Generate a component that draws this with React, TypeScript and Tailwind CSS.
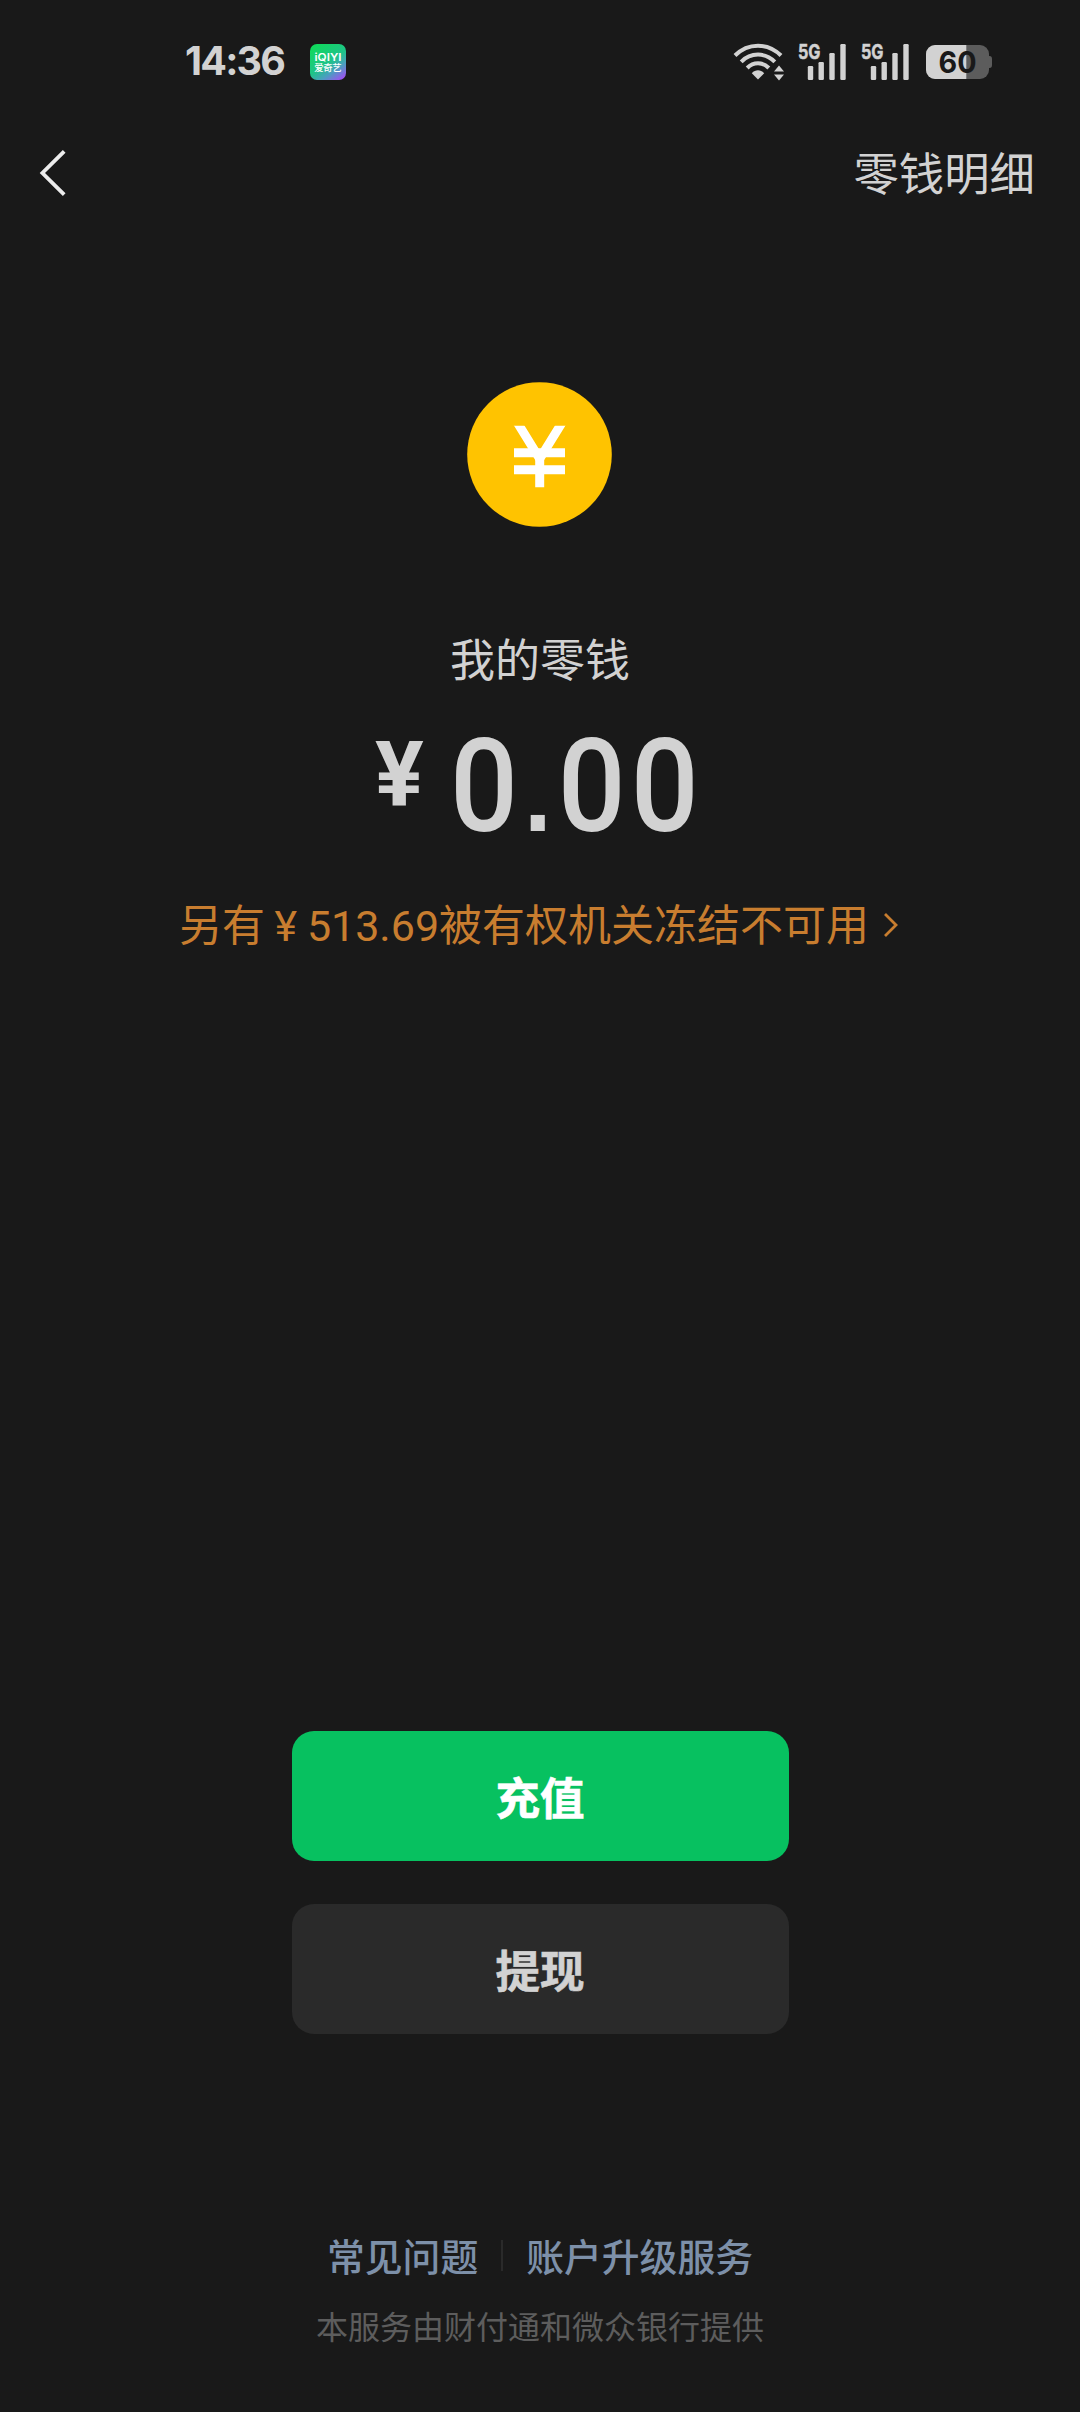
const FROZEN_AMOUNT = "513.69";

function AppBadge() {
  return (
    <svg width="36" height="36" viewBox="0 0 36 36">
      <defs>
        <linearGradient id="badge" x1="0.2" y1="0" x2="0.9" y2="1">
          <stop offset="0" stopColor="#10d95c" />
          <stop offset="0.5" stopColor="#1fc389" />
          <stop offset="0.72" stopColor="#4a9fc0" />
          <stop offset="1" stopColor="#a44cf5" />
        </linearGradient>
      </defs>
      <rect width="36" height="36" rx="7" fill="url(#badge)" />
      <text
        x="18"
        y="16.8"
        textAnchor="middle"
        textLength="27"
        lengthAdjust="spacingAndGlyphs"
        fontSize="10.8"
        className="fill-white font-['Inter',sans-serif] font-semibold"
      >
        iQIYI
      </text>
      <text
        x="18"
        y="27.4"
        textAnchor="middle"
        textLength="27.5"
        fontSize="9.4"
        className="fill-white font-['Noto_Sans_CJK_SC',sans-serif] font-medium"
      >
        爱奇艺
      </text>
    </svg>
  );
}

function WifiIcon() {
  return (
    <svg width="52" height="38" viewBox="0 0 52 38" fill="none" stroke="#d2d2d2">
      <path d="M2 12.5C15 -0.6 35 -0.6 48 12.5" strokeWidth="4" />
      <path d="M8.2 18.8C17.6 9.2 32.4 9.2 41.8 18.8" strokeWidth="4" />
      <path d="M14.2 25C20.4 18.6 29.6 18.6 35.8 25" strokeWidth="4" />
      <path d="M18.8 30.2C22.4 26.4 27.6 26.4 31.2 30.2L25 36.6Z" fill="#d2d2d2" stroke="none" />
      <path d="M46 22.5L51 28.5H41ZM46 37.5L51 31.5H41Z" fill="#d2d2d2" stroke="none" />
    </svg>
  );
}

function SignalIcon() {
  return (
    <svg width="49" height="38" viewBox="0 0 49 38" fill="#d2d2d2" className="overflow-visible">
      <text
        x="0"
        y="15.7"
        fontSize="20.5"
        textLength="22.5"
        lengthAdjust="spacingAndGlyphs"
        stroke="#d2d2d2"
        strokeWidth="0.5"
        className="font-['Inter',sans-serif] font-bold"
      >
        5G
      </text>
      <rect x="9.8" y="23" width="5.4" height="14" rx="1.2" />
      <rect x="20.5" y="19" width="5.4" height="18" rx="1.2" />
      <rect x="31.3" y="10" width="5.4" height="27" rx="1.2" />
      <rect x="42.3" y="1" width="5.4" height="36" rx="1.2" />
    </svg>
  );
}

function BatteryIcon() {
  return (
    <svg width="67" height="36" viewBox="0 0 67 36">
      <defs>
        <clipPath id="battery">
          <rect x="0" y="1" width="63" height="34" rx="9" />
        </clipPath>
      </defs>
      <path d="M62 12H63.5Q66 12 66 15V21Q66 24 63.5 24H62Z" fill="#5c5c5c" />
      <g clipPath="url(#battery)">
        <rect width="63" height="36" fill="#5c5c5c" />
        <rect width="40.3" height="36" fill="#d2d2d2" />
      </g>
      <text
        x="31.5"
        y="29.3"
        textAnchor="middle"
        fontSize="30.5"
        textLength="38"
        lengthAdjust="spacingAndGlyphs"
        className="fill-[#191919] font-['Inter',sans-serif] font-bold"
      >
        60
      </text>
    </svg>
  );
}

function CoinIcon() {
  return (
    <svg width="146" height="146" viewBox="0 0 146 146">
      <defs>
        <clipPath id="coin">
          <rect x="40" y="43.7" width="66" height="61.6" />
        </clipPath>
      </defs>
      <circle cx="72.5" cy="72.5" r="72.3" fill="#ffc300" />
      <g clipPath="url(#coin)" fill="none" stroke="#fff" strokeWidth="9">
        <path d="M49.2 38.7L72.7 76.8L96.2 38.7" />
        <path d="M47 70.8H98M47 87.7H98M72.7 70V110" />
      </g>
    </svg>
  );
}

function StatusBar() {
  return (
    <div className="flex h-[124px] items-center pl-[185px] pr-[87px]">
      <span className="w-[125px] font-['Inter',sans-serif] text-[39.5px] font-bold leading-none tracking-[-1.8px] text-[#d2d2d2]">
        14:36
      </span>
      <AppBadge />
      <div className="ml-auto flex items-center">
        <WifiIcon />
        <div className="ml-[13px] flex gap-[14px]">
          <SignalIcon />
          <SignalIcon />
        </div>
        <div className="ml-[16px]">
          <BatteryIcon />
        </div>
      </div>
    </div>
  );
}

export default function App() {
  return (
    <div className="flex h-[2412px] w-[1080px] flex-col bg-[#191919] font-['Roboto','Noto_Sans_CJK_SC',sans-serif] text-[#d2d2d2]">
      <StatusBar />

      <header className="flex h-[98px] items-center justify-between pl-[39px] pr-[45px]">
        <button aria-label="返回">
          <svg width="28" height="48" viewBox="0 0 28 48" fill="none" stroke="#ececec" strokeWidth="3.8">
            <path d="M25.2 2.4L3.4 24L25.2 45.6" />
          </svg>
        </button>
        <button className="pt-[5px] text-[45.4px] leading-none">零钱明细</button>
      </header>

      <main className="flex flex-col items-center pt-[160px]">
        <CoinIcon />

        <p className="mt-[101px] text-[45px] leading-[66px]">我的零钱</p>

        <div className="mt-[27px] flex w-[330px] items-start font-['Roboto',sans-serif]">
          <span className="w-[75px] shrink-0 text-[91px] font-bold leading-[107px]">¥</span>
          <span className="origin-left scale-x-[0.92] whitespace-nowrap text-[130px] font-medium leading-[130px] tracking-[5.6px]">
            0
            <span className="mx-[1px] font-['Liberation_Sans',sans-serif] text-[108px] font-bold">.</span>
            00
          </span>
        </div>

        <button className="mt-[37px] flex items-center gap-[14px] pr-[2px] text-[43px] leading-[60px] text-[#c87d2f]">
          <span className="[word-spacing:-1px]">另有 ¥ {FROZEN_AMOUNT}被有权机关冻结不可用</span>
          <svg width="16" height="26" viewBox="0 0 16 26" fill="none" stroke="#c87d2f" strokeWidth="2.8" className="mb-[3px]">
            <path d="M2 2L13 13L2 24" />
          </svg>
        </button>
      </main>

      <div className="mt-auto flex flex-col items-center gap-[43px] text-[44.5px] font-bold [-webkit-text-stroke:0.6px]">
        <button className="h-[130px] w-[497px] rounded-[22px] bg-[#07c160] pt-[8px] text-white">充值</button>
        <button className="h-[130px] w-[497px] rounded-[22px] bg-[#2a2a2a] pt-[8px]">提现</button>
      </div>

      <footer className="mt-[197px] flex h-[181px] flex-col items-center">
        <div className="flex items-center text-[37.8px] font-medium leading-[54px] text-[#7d90a9]">
          <a>常见问题</a>
          <span className="mx-[23px] mb-[5px] h-[31px] w-[2px] bg-[#2a2a2a]" />
          <a>账户升级服务</a>
        </div>
        <p className="mt-[20px] text-[32px] leading-[46px] text-[#5d5d5d]">本服务由财付通和微众银行提供</p>
      </footer>
    </div>
  );
}
